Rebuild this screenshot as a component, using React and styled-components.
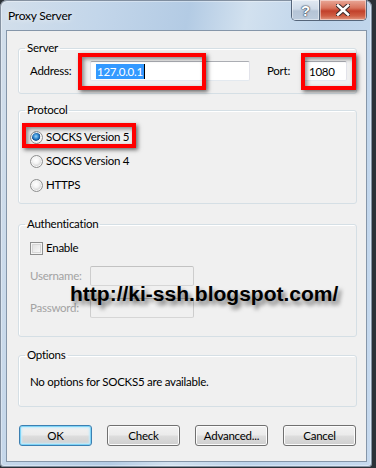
import React from "react";
import styled, { createGlobalStyle } from "styled-components";

const UI = `Lato, "Segoe UI", "Noto Sans", "Liberation Sans", sans-serif`;

const Global = createGlobalStyle`
  html, body { margin: 0; padding: 0; }
  body {
    width: 376px; height: 468px; overflow: hidden;
    background: #2b3137;
    font-family: ${UI};
    font-size: 11.5px;
    letter-spacing: -0.25px;
    color: #000;
  }
`;

const Window = styled.div`
  position: relative;
  width: 372px;
  height: 467px;
  box-sizing: border-box;
  border-radius: 7px 7px 4px 4px;
  background:
    linear-gradient(100deg, #d3dfeb 0%, #c3d6ea 22%, #b3cbe4 42%, #d2e1ef 55%, #bdd3ea 72%, #c6d9ee 100%);
  box-shadow: inset 0 0 0 1px rgba(60, 75, 95, 0.55), inset 0 0 0 2px rgba(255,255,255,0.35);
  display: flex;
  flex-direction: column;
`;

const TitleBar = styled.div`
  height: 30px;
  display: flex;
  align-items: flex-start;
  padding-left: 8px;
`;

const Title = styled.div`
  margin-top: 8px;
  line-height: 16px;
  font-size: 12px;
  color: #000;
  text-shadow: 0 0 6px rgba(255,255,255,0.9);
`;

const Controls = styled.div`
  margin-left: auto;
  margin-right: 5px;
  display: flex;
  height: 20px;
  border: 1px solid #55657a;
  border-top: none;
  border-radius: 0 0 5px 5px;
  overflow: hidden;
`;

const CtlButton = styled.div`
  width: ${p => p.$w}px;
  height: 100%;
  display: flex;
  align-items: center;
  justify-content: center;
  box-shadow: inset 0 0 0 1px rgba(255,255,255,0.45);
  background: ${p => p.$red
    ? "linear-gradient(#e9a898 0%, #d8735c 40%, #c2402a 55%, #cf5f45 80%, #e19a84 100%)"
    : "linear-gradient(#e1e9f2 0%, #cfdbe8 45%, #b5c4d6 55%, #bccbdc 100%)"};
  & + & { border-left: 1px solid #55657a; }
`;

const HelpGlyph = styled.span`
  font-family: "Liberation Sans", sans-serif;
  font-weight: bold;
  font-size: 15px;
  line-height: 15px;
  letter-spacing: 0;
  color: #fff;
  text-shadow: 0 0 1px #3a4656, 0 0 1px #3a4656, 0 0 2px #3a4656;
`;

const Client = styled.div`
  margin: 0 5px 0 6px;
  height: 432px;
  box-sizing: border-box;
  border: 1px solid #8596a9;
  background: #f0f0f0;
  padding: 10px 9px 0 11px;
  display: flex;
  flex-direction: column;
`;

const Group = styled.fieldset`
  margin: ${p => p.$gap || 0}px 0 0 0;
  padding: ${p => p.$pad};
  border: 1px solid #d5dfe5;
  border-radius: 3px;
  min-width: 0;
  box-shadow: inset 1px 1px 0 #fff;
`;

const Legend = styled.legend`
  margin-left: -5px;
  padding: 0 2px;
  line-height: 14px;
  color: #000;
`;

const Row = styled.div`
  display: flex;
  align-items: center;
  height: ${p => p.$h || 20}px;
`;

const Label = styled.span`
  width: ${p => p.$w}px;
  margin-left: ${p => p.$ml || 0}px;
  flex: none;
  color: ${p => (p.$disabled ? "#a3a3a3" : "#000")};
  line-height: 16px;
`;

const TextBox = styled.div`
  width: ${p => p.$w}px;
  height: 20px;
  box-sizing: border-box;
  flex: none;
  display: flex;
  align-items: center;
  padding-left: 5px;
  background: ${p => (p.$disabled ? "#f0f0f0" : "#fff")};
  border: 1px solid ${p => (p.$disabled ? "#cdcdcd" : "#e2e3ea")};
  border-top-color: ${p => (p.$disabled ? "#c2c2c2" : "#abadb3")};
  border-bottom-color: ${p => (p.$disabled ? "#d6d6d6" : "#e3e9ef")};
  border-radius: 2px;
`;

const Selected = styled.span`
  background: #3399ff;
  color: #fff;
  line-height: 15px;
  padding: 0 1px;
`;

const Caret = styled.span`
  width: 1px;
  height: 15px;
  background: #000;
`;

const Options = styled.div`
  display: flex;
  flex-direction: column;
  gap: 8px;
`;

const Choice = styled.label`
  display: flex;
  align-items: center;
  gap: 3px;
  height: 16px;
  line-height: 16px;
`;

const Radio = styled.span`
  width: 13px;
  height: 13px;
  box-sizing: border-box;
  border-radius: 50%;
  border: 1px solid #8e8f8f;
  background: ${p => p.$on
    ? "radial-gradient(circle at 45% 40%, #9ad4f8 0%, #2f88d0 28%, #174f8d 45%, #f4f4f4 52%, #e0e0e0 100%)"
    : "radial-gradient(circle at 45% 40%, #ffffff 0%, #f4f4f4 35%, #d8d8d8 60%, #eeeeee 100%)"};
  box-shadow: inset 0 0 0 1px #f6f6f6;
  flex: none;
`;

const Check = styled.span`
  width: 13px;
  height: 13px;
  box-sizing: border-box;
  border: 1px solid #8e8f8f;
  background: linear-gradient(135deg, #dcdcdc 0%, #f0f0f0 60%, #ffffff 100%);
  box-shadow: inset 0 0 0 1px #f4f4f4, inset 0 0 0 2px #d7d7d7;
  flex: none;
`;

const Stack = styled.div`
  display: flex;
  flex-direction: column;
  gap: ${p => p.$gap}px;
`;

const Note = styled.div`
  line-height: 16px;
`;

const Buttons = styled.div`
  margin: 18px 1px 0 1px;
  display: flex;
  justify-content: space-between;
`;

const Button = styled.div`
  width: 73px;
  height: 21px;
  box-sizing: border-box;
  display: flex;
  align-items: center;
  justify-content: center;
  border-radius: 3px;
  border: 1px solid ${p => (p.$default ? "#3c7fb1" : "#707070")};
  background: linear-gradient(#f2f2f2 0%, #ebebeb 48%, #dddddd 52%, #cfcfcf 100%);
  box-shadow: ${p => (p.$default
    ? "inset 0 0 0 1px #7fd4f7, inset 0 0 2px 2px #c4ebfb"
    : "inset 0 0 0 1px #fcfcfc")};
  line-height: 16px;
`;

const Watermark = styled.div`
  position: absolute;
  left: 70px;
  top: 282px;
  font-family: "Liberation Sans", Arial, sans-serif;
  font-weight: bold;
  font-size: 21px;
  line-height: 24px;
  letter-spacing: 0;
  color: #000;
  text-shadow: 3px 4px 4px rgba(0, 0, 0, 0.55);
  white-space: nowrap;
  pointer-events: none;
`;

const Highlight = styled.div`
  position: absolute;
  left: ${p => p.$x}px;
  top: ${p => p.$y}px;
  width: ${p => p.$w}px;
  height: ${p => p.$h}px;
  box-sizing: border-box;
  border: 4px solid #ff0000;
  box-shadow: 2px 2px 4px rgba(0,0,0,0.55), inset 2px 2px 4px rgba(0,0,0,0.45);
  pointer-events: none;
`;

export default function App() {
  return (
    <>
      <Global />
      <Window>
        <TitleBar>
          <Title>Proxy Server</Title>
          <Controls>
            <CtlButton $w={27}><HelpGlyph>?</HelpGlyph></CtlButton>
            <CtlButton $w={46} $red>
              <svg width="14" height="12" viewBox="0 0 14 12">
                <path d="M2 1.5 L12 10.5 M12 1.5 L2 10.5" stroke="#3b2a2a" strokeWidth="4.6" strokeLinecap="square" />
                <path d="M2 1.5 L12 10.5 M12 1.5 L2 10.5" stroke="#ffffff" strokeWidth="2.6" strokeLinecap="square" />
              </svg>
            </CtlButton>
          </Controls>
        </TitleBar>
        <Client>
          <Group $pad="6px 8px 12px 11px">
            <Legend>Server</Legend>
            <Row>
              <Label $w={60}>Address:</Label>
              <TextBox $w={160}><Selected>127.0.0.1</Selected><Caret /></TextBox>
              <Label $w={36} $ml={17}>Port:</Label>
              <TextBox $w={44}>1080</TextBox>
            </Row>
          </Group>
          <Group $gap={9} $pad="12px 8px 10px 11px">
            <Legend>Protocol</Legend>
            <Options>
              <Choice><Radio $on />SOCKS Version 5</Choice>
              <Choice><Radio />SOCKS Version 4</Choice>
              <Choice><Radio />HTTPS</Choice>
            </Options>
          </Group>
          <Group $gap={13} $pad="9px 8px 18px 11px">
            <Legend>Authentication</Legend>
            <Stack $gap={10}>
              <Choice><Check />Enable</Choice>
              <Stack $gap={12}>
                <Row>
                  <Label $w={60} $disabled>Username:</Label>
                  <TextBox $w={104} $disabled />
                </Row>
                <Row>
                  <Label $w={60} $disabled>Password:</Label>
                  <TextBox $w={104} $disabled />
                </Row>
              </Stack>
            </Stack>
          </Group>
          <Group $gap={11} $pad="12px 8px 16px 11px">
            <Legend>Options</Legend>
            <Note>No options for SOCKS5 are available.</Note>
          </Group>
          <Buttons>
            <Button $default>OK</Button>
            <Button>Check</Button>
            <Button>Advanced...</Button>
            <Button>Cancel</Button>
          </Buttons>
        </Client>
        <Watermark>http://ki-ssh.blogspot.com/</Watermark>
        <Highlight $x={78} $y={53} $w={128} $h={37} />
        <Highlight $x={301} $y={53} $w={55} $h={37} />
        <Highlight $x={22} $y={123} $w={114} $h={25} />
      </Window>
    </>
  );
}
